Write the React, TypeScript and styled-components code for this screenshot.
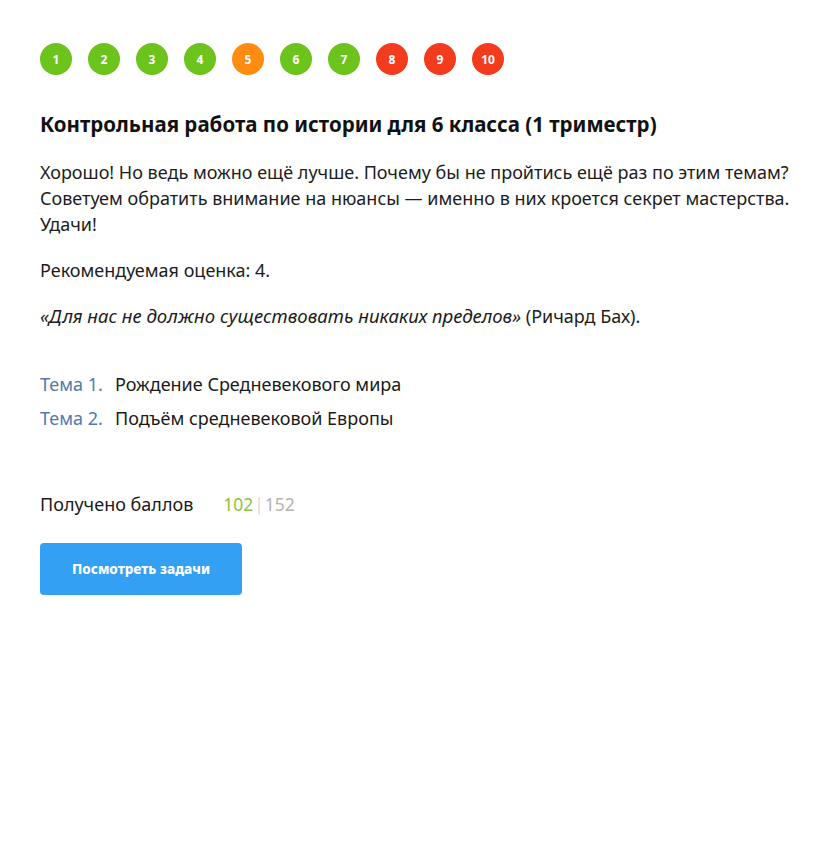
import styled, {createGlobalStyle} from "styled-components";

const GlobalStyle = createGlobalStyle`
    body {
        margin: 0;
        background: #fff;
        font-family: "Noto Sans", "Open Sans", sans-serif;
        color: #1a1a1a;
    }
`

type Grade = "good" | "fair" | "bad";

const gradeColors: Record<Grade, string> = {
    good: "#6cc31b",
    fair: "#ff8c10",
    bad: "#f23c1d",
};

const Page = styled.div`
    display: flex;
    flex-direction: column;
    align-items: flex-start;
    padding: 43px 30px 40px 40px;
`

const Steps = styled.div`
    display: flex;
    gap: 16px;
    margin-bottom: 34px;
`

const Step = styled.div<{$grade: Grade}>`
    display: flex;
    align-items: center;
    justify-content: center;
    width: 32px;
    height: 32px;
    border-radius: 50%;
    background: ${({$grade})=>gradeColors[$grade]};
    color: #fff;
    font-size: 12px;
    font-weight: 700;
`

const Title = styled.h1`
    margin: 0 0 20px;
    font-size: 20.5px;
    line-height: 30px;
    font-weight: 700;
    color: #111;
`

const Text = styled.p`
    margin: 0 0 20px;
    font-size: 18px;
    line-height: 26px;
    color: #1c1c1c;
`

const Quote = styled.em`
    font-style: italic;
    font-size: 18.6px;
`

const Topics = styled.div`
    display: flex;
    flex-direction: column;
    gap: 8px;
    margin: 22px 0 60px;
`

const Topic = styled.div`
    display: flex;
    font-size: 18px;
    line-height: 26px;
`

const TopicLabel = styled.span`
    width: 75px;
    color: #4f7bab;
`

const Score = styled.div`
    display: flex;
    gap: 30px;
    font-size: 18px;
    line-height: 26px;
    margin-bottom: 26px;
`

const ScoreValue = styled.span`
    color: #b3b3b3;
    font-size: 17.5px;

    b {
        font-weight: 400;
        color: #8cc43a;
    }

    i {
        font-style: normal;
        font-weight: 300;
        color: #c8c8c8;
        margin: 0 1px;
    }
`

const Button = styled.button`
    width: 202px;
    height: 52px;
    border: none;
    border-radius: 4px;
    background: #34a0f4;
    color: #fff;
    font-family: inherit;
    font-size: 13.5px;
    font-weight: 800;
    cursor: pointer;
`

const steps: Grade[] = ["good", "good", "good", "good", "fair", "good", "good", "bad", "bad", "bad"];

const topics = [
    {label: "Тема 1.", title: "Рождение Средневекового мира"},
    {label: "Тема 2.", title: "Подъём средневековой Европы"},
];

export default function App() {
    return (
        <Page>
            <GlobalStyle/>
            <Steps>
                {steps.map((grade, i) => (
                    <Step key={i} $grade={grade}>{i + 1}</Step>
                ))}
            </Steps>
            <Title>Контрольная работа по истории для 6 класса (1 триместр)</Title>
            <Text>
                Хорошо! Но ведь можно ещё лучше. Почему бы не пройтись ещё раз по этим темам?<br/>
                Советуем обратить внимание на нюансы — именно в них кроется секрет мастерства.<br/>
                Удачи!
            </Text>
            <Text>Рекомендуемая оценка: 4.</Text>
            <Text>
                <Quote>«Для нас не должно существовать никаких пределов»</Quote> (Ричард Бах).
            </Text>
            <Topics>
                {topics.map(t => (
                    <Topic key={t.label}>
                        <TopicLabel>{t.label}</TopicLabel>
                        {t.title}
                    </Topic>
                ))}
            </Topics>
            <Score>
                Получено баллов
                <ScoreValue><b>102</b><i>|</i>152</ScoreValue>
            </Score>
            <Button>Посмотреть задачи</Button>
        </Page>
    );
}
